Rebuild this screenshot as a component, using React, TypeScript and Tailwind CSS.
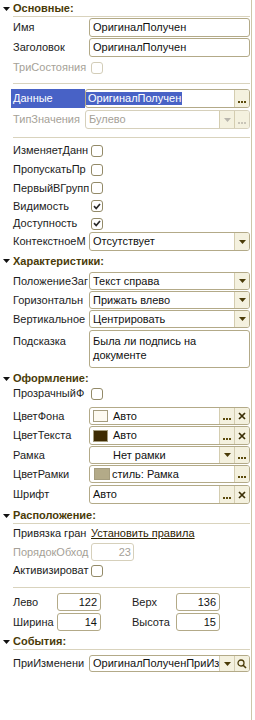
import React from "react";

type Btn = "dots" | "x" | "drop" | "find";

function Tri() {
  return (
    <svg width="7" height="4" viewBox="0 0 7 4">
      <path d="M0 0H7L3.5 4Z" fill="#111" />
    </svg>
  );
}

function Header({ title, line, className }: { title: string; line?: boolean; className: string }) {
  return (
    <div className={"flex " + className}>
      <div className="flex w-[13px] shrink-0 items-center pl-[3px]">
        <Tri />
      </div>
      <div
        className={
          line
            ? "flex flex-1 items-center border-b border-[#d9d3bd] font-bold text-[#4a3b08]"
            : "flex flex-1 items-center font-bold text-[#4a3b08]"
        }
      >
        {title}
      </div>
    </div>
  );
}

function Sep({ className }: { className: string }) {
  return <div className={"ml-[13px] h-px bg-[#d9d3bd] " + className} />;
}

function Label({ text, dim }: { text: string; dim?: boolean }) {
  return (
    <div
      className={
        dim
          ? "flex w-[89px] shrink-0 items-center overflow-hidden whitespace-nowrap pl-[13px] text-[#a5a197]"
          : "flex w-[89px] shrink-0 items-center overflow-hidden whitespace-nowrap pl-[13px] text-[#1c1c1c]"
      }
    >
      {text}
    </div>
  );
}

function Check({ on, dim }: { on?: boolean; dim?: boolean }) {
  return (
    <div
      className={
        dim
          ? "ml-[2px] flex h-[12px] w-[12px] items-center justify-center rounded-[3px] border border-[#d3cdb8] bg-white"
          : "ml-[2px] flex h-[12px] w-[12px] items-center justify-center rounded-[3px] border border-[#938a68] bg-white"
      }
    >
      {on && (
        <svg width="8" height="7" viewBox="0 0 8 7">
          <path d="M1 3.2L3.2 5.5L7 1" stroke="#2a2a2a" strokeWidth="1.7" fill="none" />
        </svg>
      )}
    </div>
  );
}

function Button({ kind, dim }: { kind: Btn; dim?: boolean }) {
  const ink = dim ? "#c9c5b8" : "#5c4b0c";
  return (
    <div
      className={
        kind === "dots"
          ? "flex h-full w-[15px] shrink-0 items-end justify-center border-l border-[#d4cdb0] bg-[#f4f1df] pb-[4px]"
          : "flex h-full w-[15px] shrink-0 items-center justify-center border-l border-[#d4cdb0] bg-[#f4f1df]"
      }
    >
      {kind === "dots" && (
        <svg width="8" height="2" viewBox="0 0 8 2">
          <rect x="0" y="0" width="2" height="2" fill={ink} />
          <rect x="3" y="0" width="2" height="2" fill={ink} />
          <rect x="6" y="0" width="2" height="2" fill={ink} />
        </svg>
      )}
      {kind === "x" && (
        <svg width="8" height="8" viewBox="0 0 8 8">
          <path d="M1 1L7 7M7 1L1 7" stroke="#3a2e06" strokeWidth="1.7" />
        </svg>
      )}
      {kind === "drop" && (
        <svg width="7" height="4" viewBox="0 0 7 4">
          <path d="M0 0H7L3.5 4Z" fill={dim ? "#b9b6ad" : "#4a3b08"} />
        </svg>
      )}
      {kind === "find" && (
        <svg width="10" height="10" viewBox="0 0 10 10">
          <circle cx="4" cy="4" r="3" stroke="#4a3b08" strokeWidth="1.3" fill="none" />
          <path d="M6.2 6.2L9 9" stroke="#4a3b08" strokeWidth="1.6" />
        </svg>
      )}
    </div>
  );
}

function Field({
  children,
  btns = [],
  dim,
  className = "",
  inner = "pl-[3px]",
}: {
  children?: React.ReactNode;
  btns?: Btn[];
  dim?: boolean;
  className?: string;
  inner?: string;
}) {
  return (
    <div
      className={
        (dim
          ? "flex overflow-hidden rounded-[3px] border border-[#d6d0bb] bg-white text-[#a5a197] "
          : "flex overflow-hidden rounded-[3px] border border-[#b3aa88] bg-white text-[#111] ") + className
      }
    >
      <div className={"flex min-w-0 flex-1 items-center overflow-hidden whitespace-nowrap " + inner}>{children}</div>
      {btns.map((b, i) => (
        <Button key={i} kind={b} dim={dim} />
      ))}
    </div>
  );
}

function Swatch({ color }: { color: string }) {
  return <span className={"mr-[5px] h-[12px] w-[15px] shrink-0 border border-[#a49c7e] " + color} />;
}

function CheckRow({ label, on, dim, className }: { label: string; on?: boolean; dim?: boolean; className: string }) {
  return (
    <div className={"flex " + className}>
      <Label text={label} dim={dim} />
      <div className="flex items-center">
        <Check on={on} dim={dim} />
      </div>
    </div>
  );
}

function FieldRow({
  label,
  className,
  children,
}: {
  label: string;
  className: string;
  children: React.ReactNode;
}) {
  return (
    <div className={"flex " + className}>
      <Label text={label} />
      {children}
    </div>
  );
}

export default function App() {
  return (
    <div className="flex h-[720px] w-[255px] bg-white font-['Liberation_Sans',Arial,sans-serif] text-[11px] leading-[13px]">
      <div className="flex w-[250px] flex-col">
        {/* Основные */}
        <Header title="Основные:" line className="h-[17px]" />
        <FieldRow label="Имя" className="mt-[1px] h-[19px]">
          <Field className="flex-1">ОригиналПолучен</Field>
        </FieldRow>
        <FieldRow label="Заголовок" className="mt-[1px] h-[19px]">
          <Field className="flex-1">ОригиналПолучен</Field>
        </FieldRow>
        <CheckRow label="ТриСостояния" dim className="mt-[1px] h-[19px]" />
        <Sep className="mt-[6px]" />

        <div className="mt-[5px] flex h-[19px]">
          <div className="ml-[11px] flex w-[74px] shrink-0 items-center bg-[#4862c6] pl-[2px] text-white">Данные</div>
          <Field className="flex-1" btns={["dots"]} inner="pl-0">
            <span className="bg-[#4862c6] pl-[2px] pr-[1px] leading-[13px] text-white">ОригиналПолучен</span>
          </Field>
        </div>
        <div className="mt-[2px] flex h-[19px]">
          <div className="ml-[11px] flex w-[74px] shrink-0 items-center pl-[2px] text-[#a5a197]">ТипЗначения</div>
          <Field className="flex-1" btns={["drop", "dots"]} dim>
            Булево
          </Field>
        </div>
        <Sep className="mt-[8px]" />

        <CheckRow label="ИзменяетДанн" className="mt-[3px] h-[19px]" />
        <CheckRow label="ПропускатьПр" className="h-[19px]" />
        <CheckRow label="ПервыйВГрупп" className="h-[18px]" />
        <CheckRow label="Видимость" on className="h-[18px]" />
        <CheckRow label="Доступность" on className="h-[17px]" />
        <FieldRow label="КонтекстноеМ" className="h-[19px]">
          <Field className="flex-1" btns={["drop"]}>
            Отсутствует
          </Field>
        </FieldRow>

        {/* Характеристики */}
        <Header title="Характеристики:" className="h-[20px]" />
        <FieldRow label="ПоложениеЗаг" className="mt-[1px] h-[18px]">
          <Field className="flex-1" btns={["drop"]}>
            Текст справа
          </Field>
        </FieldRow>
        <FieldRow label="Горизонтальн" className="mt-[1px] h-[18px]">
          <Field className="flex-1" btns={["drop"]}>
            Прижать влево
          </Field>
        </FieldRow>
        <FieldRow label="Вертикальное" className="mt-[1px] h-[18px]">
          <Field className="flex-1" btns={["drop"]}>
            Центрировать
          </Field>
        </FieldRow>
        <div className="mt-[2px] flex h-[38px]">
          <div className="w-[89px] shrink-0 overflow-hidden whitespace-nowrap pl-[13px] pt-[4px] leading-[14px] text-[#1c1c1c]">
            Подсказка
          </div>
          <div className="flex-1 rounded-[3px] border border-[#b3aa88] pl-[3px] pt-[3px] leading-[14px] text-[#111]">
            Была ли подпись на
            <br />
            документе
          </div>
        </div>

        {/* Оформление */}
        <Header title="Оформление:" className="mt-[2px] h-[17px]" />
        <CheckRow label="ПрозрачныйФ" className="h-[13px]" />
        <FieldRow label="ЦветФона" className="mt-[7px] h-[18px]">
          <Field className="flex-1" btns={["dots", "x"]}>
            <Swatch color="bg-[#fdfaf1]" />
            Авто
          </Field>
        </FieldRow>
        <FieldRow label="ЦветТекста" className="mt-[1px] h-[19px]">
          <Field className="flex-1" btns={["dots", "x"]}>
            <Swatch color="bg-[#3e2b02]" />
            Авто
          </Field>
        </FieldRow>
        <FieldRow label="Рамка" className="mt-[1px] h-[18px]">
          <Field className="flex-1" btns={["drop", "dots"]} inner="pl-[23px]">
            Нет рамки
          </Field>
        </FieldRow>
        <FieldRow label="ЦветРамки" className="mt-[1px] h-[18px]">
          <Field className="flex-1" btns={["dots"]} inner="pl-[4px]">
            <span className="mr-[2px] h-[12px] w-[16px] shrink-0 border border-[#a49c7e] bg-[#b3aa88]" />
            стиль: Рамка
          </Field>
        </FieldRow>
        <FieldRow label="Шрифт" className="mt-[2px] h-[19px]">
          <Field className="flex-1" btns={["dots", "x"]}>
            Авто
          </Field>
        </FieldRow>

        {/* Расположение */}
        <Header title="Расположение:" line className="mt-[3px] h-[17px]" />
        <div className="mt-[1px] flex h-[17px]">
          <Label text="Привязка гран" />
          <div className="ml-[2px] flex items-center text-[#2e2300] underline">Установить правила</div>
        </div>
        <div className="mt-[1px] flex h-[18px]">
          <Label text="ПорядокОбход" dim />
          <Field className="ml-[2px] w-[43px]" dim inner="justify-end pr-[2px]">
            23
          </Field>
        </div>
        <CheckRow label="Активизироват" className="mt-[1px] h-[17px]" />
        <Sep className="mt-[8px]" />

        <div className="mt-[5px] flex h-[18px]">
          <div className="flex w-[57px] shrink-0 items-center pl-[13px] text-[#1c1c1c]">Лево</div>
          <Field className="w-[44px]" inner="justify-end pr-[3px]">
            122
          </Field>
          <div className="ml-[31px] flex w-[44px] shrink-0 items-center text-[#1c1c1c]">Верх</div>
          <Field className="w-[44px]" inner="justify-end pr-[3px]">
            136
          </Field>
        </div>
        <div className="mt-[2px] flex h-[18px]">
          <div className="flex w-[57px] shrink-0 items-center pl-[13px] text-[#1c1c1c]">Ширина</div>
          <Field className="w-[44px]" inner="justify-end pr-[3px]">
            14
          </Field>
          <div className="ml-[31px] flex w-[44px] shrink-0 items-center text-[#1c1c1c]">Высота</div>
          <Field className="w-[44px]" inner="justify-end pr-[3px]">
            15
          </Field>
        </div>

        {/* События */}
        <Header title="События:" line className="mt-[2px] h-[17px]" />
        <FieldRow label="ПриИзменени" className="mt-[5px] h-[17px]">
          <Field className="flex-1" btns={["drop", "find"]}>
            ОригиналПолученПриИз
          </Field>
        </FieldRow>
      </div>
      <div className="ml-[1px] h-full w-px bg-[#cdc6a8]" />
    </div>
  );
}
